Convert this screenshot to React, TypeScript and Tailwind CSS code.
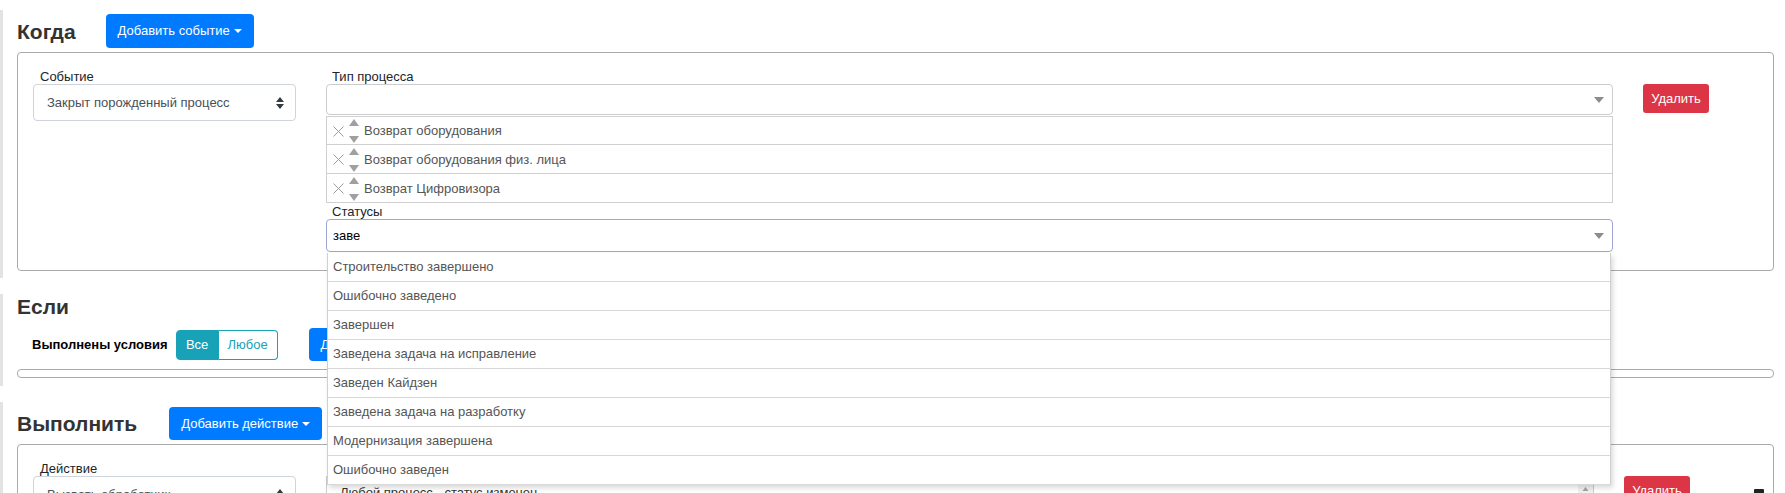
import React from 'react';

const Caret = () => (
  <span className="ml-[4px] inline-block h-0 w-0 border-x-[4px] border-t-[4px] border-x-transparent border-t-white align-middle" />
);

function BlueButton({ children }: { children: React.ReactNode }) {
  return (
    <button className="flex h-[34px] items-center rounded-[4px] bg-[#007bff] px-[12px] text-[13px] text-white">
      {children}
      <Caret />
    </button>
  );
}

function Heading({ children }: { children: React.ReactNode }) {
  return <h2 className="text-[21px] font-bold leading-[25px] text-[#333]">{children}</h2>;
}

function DeleteButton() {
  return (
    <button className="flex h-[29px] w-[66px] items-center justify-center rounded-[3px] bg-[#dc3545] text-[13px] text-white">
      Удалить
    </button>
  );
}

function DownArrow() {
  return (
    <svg width="10" height="6" viewBox="0 0 10 6" className="shrink-0">
      <path d="M0 0h10L5 6z" fill="#8c8c8c" />
    </svg>
  );
}

function NativeSelect({ value }: { value: string }) {
  return (
    <div className="flex h-[37px] items-center justify-between rounded-[4px] border border-[#ced4da] pl-[13px] pr-[11px] text-[#495057]">
      <span>{value}</span>
      <svg width="8" height="12" viewBox="0 0 8 12">
        <path d="M4 0L8 5H0z M4 12L0 7h8z" fill="#343a40" />
      </svg>
    </div>
  );
}

function Label({ children, className = '' }: { children?: React.ReactNode; className?: string }) {
  return <div className={`h-[15px] leading-[15px] ${className}`}>{children}</div>;
}

const processTypes = ['Возврат оборудования', 'Возврат оборудования физ. лица', 'Возврат Цифровизора'];

const statuses = [
  'Строительство завершено',
  'Ошибочно заведено',
  'Завершен',
  'Заведена задача на исправление',
  'Заведен Кайдзен',
  'Заведена задача на разработку',
  'Модернизация завершена',
  'Ошибочно заведен',
];

function ProcessRow({ name, first }: { name: string; first: boolean }) {
  return (
    <div
      className={`flex h-[29px] items-center border-x border-b border-[#d0d0d0] pl-[6px] pt-[1px] text-[#555] ${first ? 'border-t' : ''}`}
    >
      <svg width="11" height="11" viewBox="0 0 11 11" className="shrink-0">
        <path d="M0.5 0.5l10 10M10.5 0.5l-10 10" stroke="#9a9a9a" strokeWidth="1" />
      </svg>
      <svg width="10" height="24" viewBox="0 0 10 24" className="ml-[5px] shrink-0">
        <path d="M5 0l5 7H0z" fill="#a0a0a0" />
        <path d="M0 17h10l-5 7z" fill="#a0a0a0" />
      </svg>
      <span className="ml-[5px]">{name}</span>
    </div>
  );
}

export default function App() {
  return (
    <div className="min-h-screen bg-white pt-[10px] font-['Liberation_Sans',Arial,sans-serif] text-[13px] text-[#212529]">
      {/* Когда */}
      <section className="border-l-[3px] border-[#e2e3e5] pb-[7px] pl-[14px] pr-[11px] pt-[4px]">
        <div className="flex h-[34px] items-center gap-[30px]">
          <Heading>Когда</Heading>
          <BlueButton>Добавить событие</BlueButton>
        </div>
        <div className="mt-[4px] flex gap-[30px] rounded-[4px] border border-[#aaa] px-[15px] pb-[18px] pt-[16px]">
          <div className="w-[263px] shrink-0">
            <Label className="pl-[7px]">Событие</Label>
            <NativeSelect value="Закрыт порожденный процесс" />
          </div>
          <div className="w-[1287px] shrink-0">
            <Label className="pl-[6px]">Тип процесса</Label>
            <div className="flex h-[31px] items-center justify-end rounded-[4px] border border-[#ccc] pr-[8px]">
              <DownArrow />
            </div>
            <div className="mt-[1px]">
              {processTypes.map((p, i) => (
                <ProcessRow key={p} name={p} first={i === 0} />
              ))}
            </div>
            <div className="h-[16px] pl-[6px] pt-[1px] leading-[15px]">Статусы</div>
            <div className="relative">
              <div className="flex h-[33px] items-center justify-between rounded-[4px] border border-[#9fa6d6] pl-[6px] pr-[8px] text-black">
                <span>заве</span>
                <DownArrow />
              </div>
              <div className="absolute left-[1px] right-[2px] top-[calc(100%+1px)] z-10 border-x border-[#d0d0d0] bg-white shadow-[2px_3px_5px_rgba(0,0,0,0.15)]">
                {statuses.map((s) => (
                  <div key={s} className="flex h-[29px] items-center border-b border-[#d8d8d8] pl-[5px] text-[#555]">
                    {s}
                  </div>
                ))}
              </div>
            </div>
          </div>
          <div>
            <Label />
            <DeleteButton />
          </div>
        </div>
      </section>

      {/* Если */}
      <section className="mt-[16px] border-l-[3px] border-[#e2e3e5] pb-[8px] pl-[14px] pr-[11px]">
        <Heading>Если</Heading>
        <div className="mt-[9px] flex h-[33px] items-center pl-[15px]">
          <span className="font-bold text-black">Выполнены условия</span>
          <div className="ml-[8px] flex h-[30px]">
            <span className="flex w-[43px] items-center justify-center rounded-l-[4px] border border-[#17a2b8] bg-[#17a2b8] text-white">
              Все
            </span>
            <span className="flex w-[59px] items-center justify-center rounded-r-[4px] border border-l-0 border-[#17a2b8] text-[#17a2b8]">
              Любое
            </span>
          </div>
          <button className="ml-[31px] flex h-[33px] items-center rounded-[4px] bg-[#007bff] px-[12px] text-white">
            Добавить условие
            <Caret />
          </button>
        </div>
        <div className="mt-[8px] h-[9px] rounded-[4px] border border-[#aaa]" />
      </section>

      {/* Выполнить */}
      <section className="mt-[16px] border-l-[3px] border-[#e2e3e5] pl-[14px] pr-[11px] pt-[5px]">
        <div className="flex h-[33px] items-center gap-[32px]">
          <Heading>Выполнить</Heading>
          <button className="flex h-[33px] items-center rounded-[4px] bg-[#007bff] px-[12px] text-white">
            Добавить действие
            <Caret />
          </button>
        </div>
        <div className="mt-[4px] flex gap-[30px] rounded-[4px] border border-[#aaa] px-[15px] pb-[17px] pt-[16px]">
          <div className="w-[263px] shrink-0">
            <Label className="pl-[7px]">Действие</Label>
            <NativeSelect value="Вызвать обработчик" />
          </div>
          <div className="w-[1268px] shrink-0">
            <Label className="pl-[6px]">Статус</Label>
            <div className="flex h-[80px] border border-[#ccc]">
              <div className="flex-1 pl-[13px] pt-[6px] text-[#333]">Любой процесс - статус изменен</div>
              <div className="w-[15px] bg-[#f1f1f1]">
                <svg width="15" height="15" viewBox="0 0 15 15" className="mt-[5px]">
                  <path d="M7.5 5l3 4h-6z" fill="#a3a3a3" />
                </svg>
              </div>
            </div>
          </div>
          <div className="flex flex-1 justify-between">
            <div>
              <Label />
              <DeleteButton />
            </div>
            <div className="-mr-[6px] mt-[28px] h-[10px] w-[10px] rounded-[1px] bg-[#222]" />
          </div>
        </div>
      </section>
    </div>
  );
}
